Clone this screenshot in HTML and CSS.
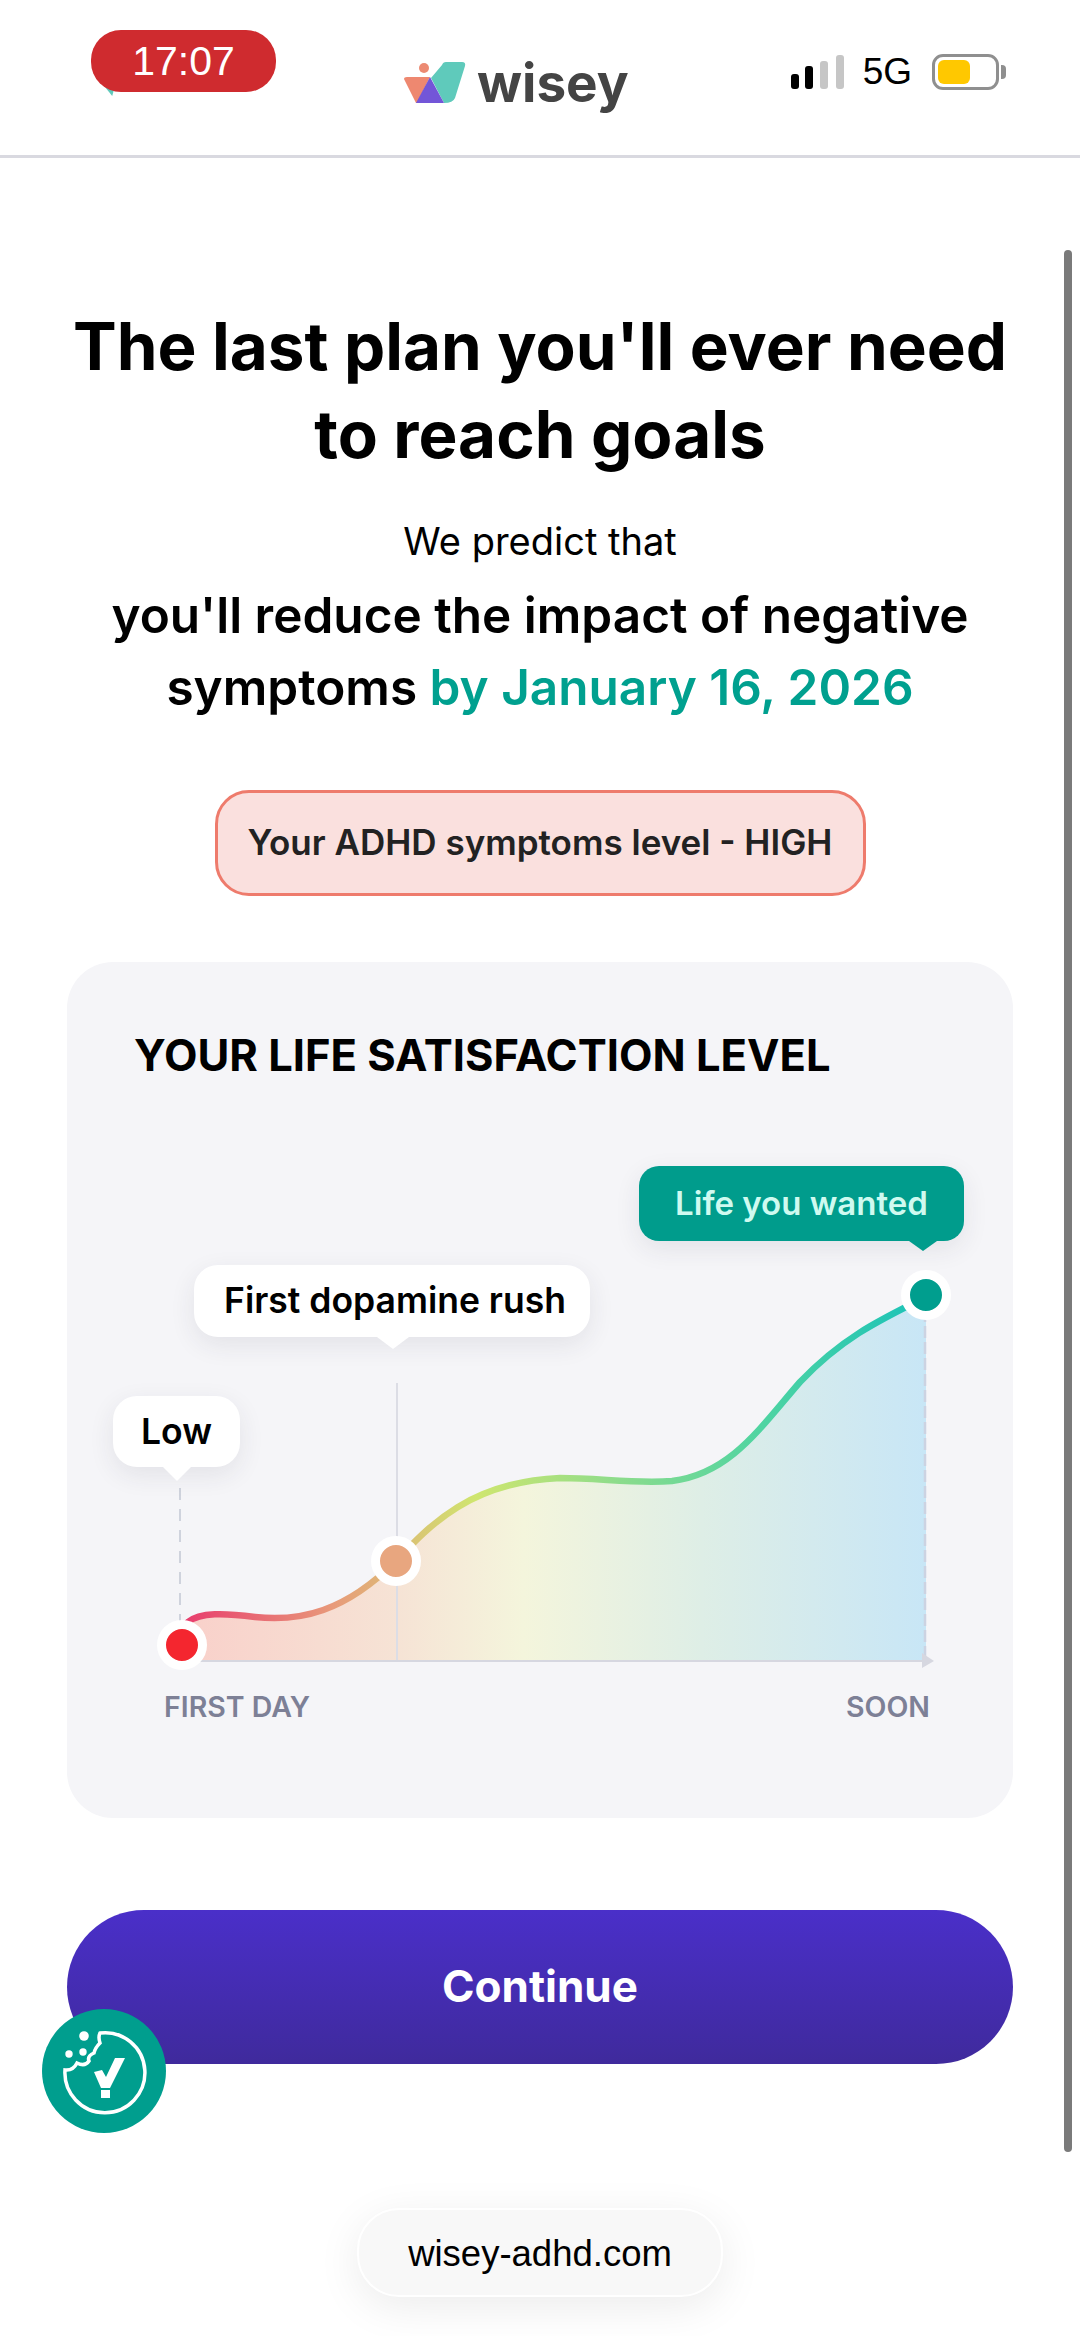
FILE: index.html
```html
<!DOCTYPE html>
<html lang="en">
<head>
    <meta charset="UTF-8">
    <meta name="viewport" content="width=device-width, initial-scale=1.0">
    <title>Wisey plan</title>
    <link rel="stylesheet" href="styles.css">
</head>
<body>
    <!-- Top bar -->
    <header class="top-bar">
        <div class="time-pill">17:07</div>
        <div class="logo">
            <svg class="logo-mark" viewBox="0 0 62 42" width="62" height="42">
                <circle cx="20" cy="6" r="5" fill="#ec8a72"/>
                <path d="M0 17 Q0 15 3 15 L26 15 L13 41 L12 41 Z" fill="#ee8870"/>
                <path d="M38 3 Q39 0 42 0 L58 0 Q62 0 61 4 L51 36 Q49 41 40 41 L27 16 Z" fill="#5fcabb"/>
                <path d="M26 15 L40 41 L12 41 Z" fill="#7356d8"/>
            </svg>
            <span class="logo-text">wisey</span>
        </div>
        <div class="status">
            <svg class="signal" viewBox="0 0 54 34" width="54" height="34">
                <rect x="0" y="19" width="8" height="15" rx="3" fill="#000"/>
                <rect x="14" y="11" width="8" height="23" rx="3" fill="#000"/>
                <rect x="29" y="6" width="8" height="28" rx="3" fill="#c6c6c6"/>
                <rect x="45" y="0" width="8" height="34" rx="3" fill="#c6c6c6"/>
            </svg>
            <span class="network">5G</span>
            <div class="battery"><div class="battery-fill"></div></div>
        </div>
    </header>

    <main class="content">
        <h1>The last plan you'll ever need<br>to reach goals</h1>
        <p class="predict">We predict that</p>
        <p class="lead">you'll reduce the impact of negative<br>symptoms <span class="accent">by January 16, 2026</span></p>

        <div class="level-badge">Your ADHD symptoms level - HIGH</div>

        <!-- Chart card -->
        <section class="card">
            <h2>YOUR LIFE SATISFACTION LEVEL</h2>
            <div class="chart">
                <svg class="chart-svg" viewBox="67 1140 946 540" width="946" height="540">
                    <defs>
                        <linearGradient id="areaFill" gradientUnits="userSpaceOnUse" x1="182" y1="0" x2="925" y2="0">
                            <stop offset="0" stop-color="#f9d0ca"/>
                            <stop offset="0.29" stop-color="#f6e3d5"/>
                            <stop offset="0.46" stop-color="#f4f5dc"/>
                            <stop offset="0.7" stop-color="#deeee6"/>
                            <stop offset="1" stop-color="#c8e6f6"/>
                        </linearGradient>
                        <linearGradient id="curveStroke" gradientUnits="userSpaceOnUse" x1="190" y1="0" x2="905" y2="0">
                            <stop offset="0" stop-color="#e8406e"/>
                            <stop offset="0.2" stop-color="#e89a7a"/>
                            <stop offset="0.4" stop-color="#cfe66f"/>
                            <stop offset="0.6" stop-color="#8cdc8c"/>
                            <stop offset="0.8" stop-color="#4fd4a2"/>
                            <stop offset="1" stop-color="#20c4b6"/>
                        </linearGradient>
                    </defs>
                    <path d="M182 1661 L182 1626 C200 1612 225 1613 255 1617 C300 1622 345 1612 396 1561 C430 1525 470 1482 560 1478 C600 1478 635 1484 672 1481 C730 1474 760 1428 800 1382 C840 1340 875 1322 926 1297 L926 1661 Z" fill="url(#areaFill)"/>
                    <line x1="397" y1="1383" x2="397" y2="1661" stroke="#dcdde5" stroke-width="2"/>
                    <line x1="180" y1="1488" x2="180" y2="1625" stroke="#cfd3dd" stroke-width="2" stroke-dasharray="12 9"/>
                    <line x1="925" y1="1310" x2="925" y2="1661" stroke="#ccd3e2" stroke-width="2.5" stroke-dasharray="12 4"/>
                    <line x1="182" y1="1661" x2="922" y2="1661" stroke="#d6d7e0" stroke-width="2"/>
                    <path d="M922 1653 L934 1661 L922 1668 Z" fill="#d6d7e0"/>
                    <path d="M188 1622 C200 1612 225 1613 255 1617 C300 1622 345 1612 396 1561 C430 1525 470 1482 560 1478 C600 1478 635 1484 672 1481 C730 1474 760 1428 800 1382 C840 1340 875 1322 926 1297" fill="none" stroke="url(#curveStroke)" stroke-width="6.5" stroke-linecap="round"/>
                    <circle cx="182" cy="1645" r="20.5" fill="#f4262f" stroke="#fff" stroke-width="9"/>
                    <circle cx="396" cy="1561" r="20.5" fill="#e8a67f" stroke="#fff" stroke-width="9"/>
                    <circle cx="926" cy="1295" r="20.5" fill="#009e8e" stroke="#fff" stroke-width="9"/>
                </svg>
                <div class="tip tip-low">Low</div>
                <div class="tip tip-rush">First dopamine rush</div>
                <div class="tip tip-wanted">Life you wanted</div>
            </div>
            <div class="axis">
                <span>FIRST DAY</span>
                <span>SOON</span>
            </div>
        </section>

        <button type="button" class="continue-btn">Continue</button>

        <div class="url-row">
            <div class="url-pill">wisey-adhd.com</div>
        </div>
    </main>

    <!-- Cookie badge -->
    <div class="cookie-badge">
        <svg viewBox="0 0 124 124" width="124" height="124">
            <path d="M58 24 A40 40 0 1 1 23 61 Q31 62 35 54 Q43 58 47 52 Q45 47 52 44 Q53 39 58 34 Q56 28 58 24 Z" fill="none" stroke="#fff" stroke-width="3.5"/>
            <circle cx="42" cy="27" r="4.8" fill="#fff"/>
            <circle cx="41" cy="43" r="3.7" fill="#fff"/>
            <circle cx="27" cy="45" r="3.7" fill="#fff"/>
            <path d="M52 63 L60 61 L64 68 L73 49 L83 49 L68 79 L59 79 Z" fill="#fff"/>
            <rect x="59" y="81" width="9" height="8" fill="#fff"/>
        </svg>
    </div>

    <div class="scroll-thumb"></div>
</body>
</html>
```

FILE: styles.css
```css
/* Basic Reset */
* { box-sizing: border-box; margin: 0; padding: 0; }

body {
    width: 1080px;
    height: 2336px;
    position: relative;
    overflow: hidden;
    background-color: #fff;
    font-family: Inter, "Noto Sans", sans-serif;
    color: #000;
}

/* Top bar */
.top-bar {
    height: 158px;
    display: flex;
    align-items: flex-start;
    padding: 0 81px 0 91px;
    border-bottom: 3px solid #d9d9e0;
}

.time-pill {
    position: relative;
    width: 185px;
    height: 62px;
    margin-top: 30px;
    background-color: #cf2b2f;
    border-radius: 30px;
    color: #fff;
    font-family: "Liberation Sans", sans-serif;
    font-size: 41px;
    line-height: 62px;
    text-align: center;
}

.time-pill::before {
    content: "";
    position: absolute;
    z-index: -1;
    left: 10px;
    top: 52px;
    width: 14px;
    height: 14px;
    background-color: #5fc9bb;
    clip-path: polygon(0 0, 100% 30%, 80% 100%);
}

.logo {
    display: flex;
    align-items: flex-start;
    margin: 62px 0 0 128px;
}

.logo-text {
    margin: -12px 0 0 11px;
    font-size: 53px;
    font-weight: 700;
    line-height: 66px;
    color: #444;
}

.status {
    display: flex;
    align-items: center;
    margin: 54px 0 0 auto;
}

.network {
    margin-left: 18px;
    font-family: "Liberation Sans", sans-serif;
    font-size: 37px;
    line-height: 36px;
}

.battery {
    position: relative;
    width: 67px;
    height: 36px;
    margin-left: 20px;
    padding: 3px;
    border: 3px solid #8f8f8f;
    border-radius: 11px;
}

.battery::after {
    content: "";
    position: absolute;
    left: 66px;
    top: 8px;
    width: 5px;
    height: 14px;
    background-color: #8f8f8f;
    border-radius: 0 4px 4px 0;
}

.battery-fill {
    width: 32px;
    height: 100%;
    background-color: #ffc800;
    border-radius: 6px;
}

/* Page text */
.content {
    display: flex;
    flex-direction: column;
    align-items: center;
    padding: 145px 67px 0;
}

h1 {
    font-size: 65.5px;
    font-weight: 700;
    line-height: 88px;
    text-align: center;
    white-space: nowrap;
}

.predict {
    margin-top: 37px;
    font-size: 38px;
    line-height: 50px;
}

.lead {
    margin-top: 13px;
    font-size: 49.5px;
    font-weight: 600;
    line-height: 72px;
    text-align: center;
    white-space: nowrap;
}

.accent {
    color: #00a08f;
}

.level-badge {
    width: 651px;
    height: 106px;
    margin-top: 67px;
    background-color: #fae0de;
    border: 3.5px solid #ee7b6c;
    border-radius: 34px;
    color: #222;
    font-size: 35px;
    font-weight: 600;
    line-height: 99px;
    text-align: center;
}

/* Chart card */
.card {
    width: 946px;
    height: 856px;
    margin-top: 66px;
    padding-top: 68px;
    background-color: #f5f5f8;
    border-radius: 46px;
}

.card h2 {
    padding-left: 67px;
    font-size: 43.5px;
    font-weight: 700;
    line-height: 50px;
}

.chart {
    position: relative;
    height: 540px;
    margin-top: 60px;
}

.chart-svg {
    display: block;
}

.tip {
    position: absolute;
    background-color: #fff;
    border-radius: 24px;
    box-shadow: 0 8px 26px rgba(40, 40, 70, 0.09);
    font-size: 35.5px;
    font-weight: 600;
    text-align: center;
}

.tip::after {
    content: "";
    position: absolute;
    top: 100%;
    border-style: solid;
    border-color: #fff transparent transparent;
}

.tip-low {
    left: 46px;
    top: 256px;
    width: 127px;
    height: 71px;
    line-height: 71px;
}

.tip-low::after {
    left: 50px;
    border-width: 14px 14px 0;
}

.tip-rush {
    left: 127px;
    top: 125px;
    width: 396px;
    height: 72px;
    padding-left: 6px;
    line-height: 72px;
}

.tip-rush::after {
    left: 183px;
    border-width: 12px 16px 0;
}

.tip-wanted {
    left: 572px;
    top: 26px;
    width: 325px;
    height: 75px;
    background-color: #009c8c;
    border-radius: 20px;
    color: #cffaf0;
    font-size: 33px;
    line-height: 75px;
}

.tip-wanted::after {
    left: 270px;
    border-width: 10px 14px 0;
    border-top-color: #009c8c;
}

.axis {
    display: flex;
    justify-content: space-between;
    margin-top: 10px;
    padding: 0 83px 0 97px;
    color: #7d8096;
    font-size: 28.5px;
    font-weight: 600;
    line-height: 34px;
}

/* Button */
.continue-btn {
    width: 946px;
    height: 154px;
    margin-top: 92px;
    padding-bottom: 3px;
    background: linear-gradient(180deg, #4a2fc9, #3f2a9c);
    border: none;
    border-radius: 77px;
    color: #fff;
    font-family: Inter, "Noto Sans", sans-serif;
    font-size: 44px;
    font-weight: 700;
}

.url-row {
    display: flex;
    justify-content: center;
    margin-top: 144px;
}

.url-pill {
    width: 366px;
    height: 89px;
    background-color: #f8f8f8;
    border: 2px solid #fff;
    border-radius: 42px;
    box-shadow: 0 10px 44px rgba(0, 0, 0, 0.08);
    font-family: "Liberation Sans", sans-serif;
    font-size: 36.5px;
    line-height: 87px;
    text-align: center;
}

/* Overlays */
.cookie-badge {
    position: absolute;
    left: 42px;
    top: 2009px;
    width: 124px;
    height: 124px;
    background-color: #009e8e;
    border-radius: 50%;
}

.cookie-badge svg {
    display: block;
}

.scroll-thumb {
    position: absolute;
    right: 8px;
    top: 250px;
    width: 8px;
    height: 1902px;
    background-color: #7a7a7a;
    border-radius: 4px;
}
```
